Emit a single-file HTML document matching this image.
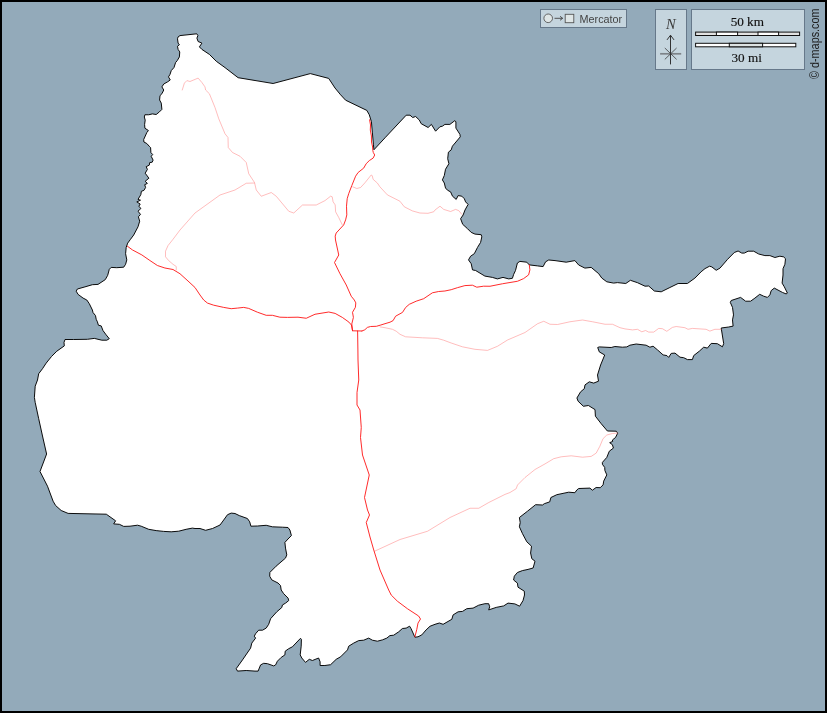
<!DOCTYPE html>
<html><head><meta charset="utf-8"><title>map</title>
<style>
html,body{margin:0;padding:0;background:#93aaba;}
body{width:827px;height:713px;overflow:hidden;position:relative;font-family:"Liberation Sans",sans-serif;}
svg{position:absolute;left:0;top:0;display:block;will-change:transform}
</style></head><body>
<svg width="827" height="713" viewBox="0 0 827 713">
<rect x="0" y="0" width="827" height="713" fill="#93aaba"/>
<polygon points="178.1,36.9 180,35.6 196.8,33.8 197.9,35.6 196.9,38.1 198.1,41.5 201.9,43.1 199.4,46.9 201.9,49.4 209.4,54.4 216.25,61.25 225,67.6 238.1,77.7 273.1,83.5 310.3,73.6 328.7,78.4 335,88 340.6,94.8 345.6,100.2 366.8,110.4 369.3,114.8 371.4,121.7 372.4,132.9 373.4,144.2 373.9,149.8 385,137.8 406.2,115.2 410,115.2 412.7,117.5 415.6,116.5 419.3,120 421.2,123.7 428.1,127.5 431.4,124.4 435.6,131.2 439.9,126.8 442.4,126.2 444.9,124.4 449.9,124.4 454.9,120.6 455.9,121.9 455.9,128.1 459.9,134.3 460.3,136.8 452.4,146.2 451.2,149.9 448.4,152.2 447.7,158.7 448.9,163.7 445.5,169.3 444.3,175.5 442.4,179.9 444.3,183 445.5,188 447.5,190.2 450.6,191.9 452.5,196.2 456.2,199.4 458.1,195.6 461.8,196.2 464.3,198.7 465.6,201.9 468.1,204.4 465,210 463.1,215 460.6,218.7 462.7,224.3 467.5,228.7 471.2,232.4 475,234.1 481.2,234.7 481.8,236.8 480.6,242.4 477.5,247.4 474.3,253.7 470.6,256.2 468.5,259.9 471.2,263.7 472.5,269.9 475.6,270.5 484.9,276.1 492.4,277.4 497.4,278.9 503,277.4 508.7,278.9 512.4,278.3 513.7,274.3 515.5,270.5 517.4,263 519.9,261.4 526.8,262.2 529.3,264.9 537.5,265.9 543.1,266.6 545.6,261.8 548.7,260 555,260.6 566.2,262.2 574.9,260.6 578.7,265 584.9,268.1 591.2,267.4 598.7,273.7 601.8,278.1 606.8,281.8 613.6,283.1 617.4,282.6 625.8,283.5 630.4,280.3 637.5,282.7 645,286.2 648.7,286 654.3,291 661.2,291.8 669.9,287.5 678.1,283.5 687.4,283.5 694.9,278.1 701.1,271.8 705,268.6 709.6,266.2 711.8,266.9 716.2,270.3 720,268.1 727.5,259.4 734.3,252.5 738.1,251 741.8,253.1 744.3,253.1 748.1,251.2 753.7,251.2 758.7,254 764.9,255.6 769.9,255.6 774.9,257.5 779.9,256.2 783.6,256.9 785.5,258.7 784.9,264.3 783,268.7 783,275 782.1,283.1 784.3,286.8 787.4,293.1 786.1,293.9 782.4,292.4 774.3,288.1 771.2,290.6 769.9,294.9 767.4,297.4 763.7,296.2 759.7,294.3 754.9,298.1 750.6,301.2 745.6,301.2 740.6,297.4 731.2,300.5 730.3,302.4 732.5,307.4 733.5,314.9 732.5,319.9 733.1,326.1 728.7,327 721.2,328 723.7,343.7 722.4,346.8 717.4,343.7 711.2,343.4 707.4,348.1 703.7,347.2 699.3,351.2 693.7,355.6 692.4,359.6 687.5,359.6 683.7,357.7 680,357.2 675,353.1 671.2,353.4 668.7,357.4 666.9,355.6 663.1,354.9 657.5,349.9 653.1,346.2 649.9,347.2 646.1,345.2 636.2,344 629.9,345.2 626.8,346.9 622.4,347.2 614.9,346.5 611.2,347.5 599.3,346.9 597.7,347.5 599.3,351.9 604.7,355 600.6,365 597.5,375 598.5,381.2 593.7,383.1 589.3,381.8 585,384.9 584.3,388.7 580.6,391.8 576.9,398 578.1,401.2 583.4,406.3 588.4,405.5 595,409.6 595.4,416.2 601.2,423.7 607.4,431 616.2,431.2 617.7,433.1 615.5,437.5 612.4,440 612.7,441.4 609.7,442.7 612.4,444.7 613.4,448.1 609.3,451.2 606.8,457.4 602.4,462.4 602.4,464.3 604.7,467.4 604.9,470.5 606.8,474.9 603.7,481.1 603.1,484.9 600.2,487.7 596.1,487.5 592.4,490.2 589.9,488.1 578.7,488.5 576.8,490 574.9,492.7 568.7,492.2 556.8,494.7 550.9,497.5 549.7,501.9 544.3,503.7 542.5,505 535.6,504.7 527.5,511.2 519.4,517.5 520.2,522.5 519.4,526.8 522.5,533.7 526.8,541.8 531.5,546.2 530.6,553 531.8,558.7 535,561.2 533.1,568 528,569.4 522.4,570.6 517.4,572.5 514.3,576.2 513.6,580 517.4,583.1 518,587.2 524.3,591.2 524.5,595 523,600.6 519.6,606.2 514.9,603.9 508,603.1 503.7,605.9 496.2,607.4 488.7,609.9 489.7,606.8 488.7,603.7 484.9,603.7 478.7,605.2 473.1,608.1 466.8,608.7 462.5,611.4 458.1,611.8 453.1,614.9 451.8,619.3 443.1,624.3 439.4,623 435,624.3 430,626.25 426.1,629.9 421.8,634.9 418,636.8 414.9,637.2 411.1,628.7 409.6,626.2 406.2,628.1 402.4,628.5 398.7,631.8 393.7,635.2 389.9,635.6 386.8,638.1 382.4,639.9 377.4,641.2 372.4,640.2 368.7,638.1 363.7,640.2 358.7,640.6 353.7,643.1 348.7,646.2 347.5,649.9 340.6,656.8 336.2,659.3 330.6,664.7 324.9,665.5 320.1,665.5 320.1,661.8 318.6,658 312.4,660.5 309.3,659.3 305.5,662.4 301.8,658 300.2,654.9 301.2,646.2 301.4,639.3 300.5,638.3 292.4,646.8 288.7,648.7 285.2,651.2 284.9,654.9 281.2,657.4 277.4,661.2 275.6,664.9 273.7,665.9 267.5,663.7 263.7,663.3 260.6,664.9 258.1,671.1 255,671.1 246.2,670.5 237.5,671.1 236.2,668.7 242.5,659.9 250.6,648.1 251.8,643.1 255.6,638.1 254.3,636.2 255.6,633.7 258.7,630.2 262.5,630.2 266.2,628.1 268.7,624.3 270.6,618.7 276.8,611.8 281.8,607.5 282.4,605 285.6,603.1 288.7,600.6 288.1,598.1 283.7,593.7 281.2,590 280.5,585.5 278,583 271.8,579.9 269.7,576.2 269.9,572.4 276.1,566.2 285.5,558.1 286.8,554.9 285.5,548.1 284.9,542.4 288,539 291.4,535.6 289.9,530 288,527.5 282.4,527.2 272.4,526.8 266.2,525.3 257.4,526 250.9,526.2 249.7,521.8 247.4,518.5 239.3,515.6 235,513.5 231.2,513.1 227.5,514.7 223.7,520 220,525 212.5,528.5 205.6,530.3 200,528.5 195,528.5 192.4,528.1 186.1,529.3 178.7,531.2 171.2,531.8 163.7,531.4 156.2,530.6 148.7,529.3 141.2,526.2 137.5,525.2 130,526.2 123.7,526.4 119.4,524.3 113.7,523.9 115.6,520.8 106.3,514.2 68.1,513.4 61.2,510.5 55.6,505.5 53.1,501.2 47.5,486.2 40,471.5 46.6,454 42.5,436 38.7,418.7 35.2,402.4 34.4,397.4 35.2,386.2 37.5,380 38.7,373.7 42.5,368.7 46.2,363.1 51.5,356.5 56.8,351.2 64.3,345.9 64,342.4 65,339.5 73.7,339.5 87.4,339.3 94.3,338.4 101.8,340.2 106.8,340.2 109.3,338.7 106.2,334.9 103,330.6 101.2,325.9 98.4,325.2 97.4,321.8 96.2,319.3 95.5,315.6 93,312.5 92.4,310 89.3,303.7 86.8,300 83.1,298.1 78.1,294.4 76.2,291.2 77.4,289 84.9,286.9 92.4,284.7 98,284.4 105.3,279.6 107.7,275.3 109.3,269.3 111.2,267.4 116.8,267.7 123.7,267.2 125.6,264.3 126.8,259.9 125.6,253.7 126.2,247.4 127.7,243.1 130.5,239.3 133.7,235 138,226.8 139.7,221.2 138.4,216.8 140.5,214.4 138,211.2 140.9,208.5 138.9,206.2 140.2,204 136.8,201.9 140.5,200.2 138,199.4 140.8,194.7 141.4,191.3 143.9,190.4 145.6,187.5 144.7,184.7 147.4,183.4 145.2,181.3 148.9,178.2 145.2,173.2 147.4,169.4 146.2,166.7 149.3,165.1 149.7,162.6 152.2,162.2 153.1,160.1 151.2,156.3 152.7,154.5 150.9,152.6 150.6,147.6 149.3,146.3 146.8,143.5 143.9,142 143.7,139.5 146.8,132.6 148.4,130.5 144.9,128.2 144.6,124.5 145.2,120.1 144.3,117 144.9,114.75 148.75,114.75 152.4,113.9 156.2,114.5 159.4,111.9 161.9,109.4 161.25,103.1 159.6,100 160,95.6 161.9,93.75 163.75,90 161.9,86.9 163.75,84 167.5,81.9 170.25,80 168.5,76.9 170,74.4 171.25,70.6 174,67.5 175.6,62.5 177.25,60.6 179.4,56.9 179.75,51.9 178.1,49.4 177.5,46.25 179.4,44.75 178.1,43.1 177.5,38.75" fill="#ffffff" stroke="#000" stroke-width="0.95" stroke-linejoin="round"/>
<g fill="none" stroke="#ff8c8c" stroke-width="0.58" stroke-linejoin="round" stroke-linecap="round">
<polyline points="182.25,90 184.4,83.1 186.9,80.6 190,81.5 198.1,78.1 201.9,82.5 205,86.9 205.6,90 209.4,93.75 215,107.5 218.75,118.75 225,133.75 228,137.5 228.25,147.5 232.5,152.5 240,156.25 246.25,162.5 248.75,173.75 254.5,182.5 256.25,190 261.25,196.25 271.25,192.5 276.25,196.25 288.75,211.25 293.75,213 302.5,205 316.25,205 325,200.6 330.6,196.2 332.2,196.8 333.1,201.8 335.2,204.9 335.6,211.8 338.7,217.4 342.2,224.7"/>
<polyline points="254.5,183 246.25,183.25 235,190 220,195 195,213 180,230 173,239.3 168,245.6 165.5,251.2 165.5,256.8 168.6,260.5 173,264.3 176.25,266.5 176.25,270"/>
<polyline points="352.7,186.8 356.8,188.5 360.6,187.5 365,182.7 371.2,175 372.2,175.6 373.1,179.3 377.4,183.1 379.9,186.8 387.4,194.9 399.9,201.2 404.3,206.8 412.4,210.9 419.9,213 428,213.3 433.75,211.75 435,210 440,206.2 443.7,209.4 450.6,211.5 455.6,209.4 458.7,210.6 461.8,214.3"/>
<polyline points="380.1,326.9 385,327.7 392.5,329.3 396.2,331.2 400,334.3 405.6,336.8 422.5,337.8 437.4,338.4 443.7,340.2 451.2,343 462.4,346.8 474.9,349.3 487.5,350.4 497.5,346.25 507.5,340 525,332.5 537.5,323.75 543.75,321.25 550,324.25 557.5,324.5 570,321.75 582.5,320 592.5,321.75 605,324.25 612.5,324.25 620,327.7 625,328.9 632.5,329.9 637.5,329.3 641.8,331.8 645.6,330.5 648.7,332.1 653.7,332.1 658.7,328.4 662.4,328.7 666.8,331.3 672.4,327.4 676.2,326.5 684.9,327.7 688,329.3 692.4,328.4 706.1,329.3 709.9,331.1 714.9,329.3 721.2,329.3"/>
<polyline points="374.5,551.25 400,539.5 427.5,531.25 450,517.5 470,508.25 478.75,508.25 488.75,502.5 505,494.4 510,492.5 516.2,488.7 517.5,485 525,477.5 535,469.5 545,463.9 553.7,458.7 561.2,456.8 571.2,455.8 582.5,457.2 591.2,456.4 596.2,453.1 599.9,446.2 603,438.7 606.8,435 612.4,433.5 617.4,433.1"/>
</g>
<g fill="none" stroke="#ff1818" stroke-width="0.92" stroke-linejoin="round" stroke-linecap="round">
<polyline points="127.4,246.2 132.4,249.9 141.8,254.9 149.9,260.5 157.4,265.5 164.9,268 173,269.5 180,273.75 188,281 195,287.5 200,295 203.7,300 207.5,303.1 213.7,305.2 223.7,307.4 231.2,308.7 237.4,308.1 243.7,307.4 248.7,308.4 257.4,312.2 266.2,315.3 272.4,315.3 279.9,317.2 287.4,317.4 298,317.2 306.25,318.25 315,314.25 328.75,312 335.1,313.4 342.3,317.4 348.9,322.1 351.4,325 352.5,330.5"/>
<polyline points="369.6,119.8 370.5,125 370.3,130 371.4,136 371.5,142 372.6,147 372.8,150.4 373.3,152.5 374.7,155 373.1,158.1 369.3,160.6 366.2,163.7 363.7,168.1 358.1,172.5 355.6,176.2 351.8,185.6 348.7,193.7 347.2,198.7 346.5,206.2 346.8,214.9 345.6,219.9 343.7,224.9 336.2,233 335.2,236.1 335.5,240 338.75,255 334.5,262.5 340,273.75 346.25,285 351.25,296.25 354.3,300 355.8,302.9 355.4,307.3 352.5,312.3 353.4,317.4 351.8,323.9 352.5,330.5"/>
<polyline points="352.5,330.8 361.9,331"/>
<polyline points="357.6,331 357.9,350 358,360 358.75,380 357,392.5 357,405 360,410 361.25,427.5 360.5,437.5 362.5,455 369.25,475 364.5,497.5 367.5,510 369.5,515 366.25,522.5 370,537 373.75,550 380,570 388.7,590 391.2,595 397.4,601.2 407.4,608.7 418.6,616 420.5,619 418,623.1 416.8,629.3 414.9,636.8"/>
<polyline points="361.9,331 364.8,329.8 367.4,327.4 370.6,326.5 376.4,326.3 380.8,325 385,323.7 390,322.2 393.1,320.6 395.6,316.2 402.5,312.4 405.6,307.5 409.3,304.3 416.2,301.2 423.7,298.7 432.4,292.8 438.7,291.5 444.9,291 451.2,289.7 457.4,287.7 464.9,285.6 472.4,285.2 476.8,287.2 483.6,286.2 490,286.25 502.5,283.75 517.5,281.25 523.6,278.6 528.6,274.9 529.9,269.9 529.3,264.9"/>
</g>
<g fill="#000">
<rect x="0" y="0" width="827" height="2"/>
<rect x="0" y="711" width="827" height="2"/>
<rect x="0" y="0" width="2" height="713"/>
<rect x="825" y="0" width="2" height="713"/>
</g>
<g>
<rect x="540.5" y="9.5" width="86" height="18" fill="#c5d5de" stroke="#66788a" stroke-width="1"/>
<circle cx="548.2" cy="18.3" r="4.3" fill="#dfe6e6" stroke="#555" stroke-width="0.9"/>
<path d="M554.5 18.3H562.5M560 16.3L562.7 18.3L560 20.3" fill="none" stroke="#444" stroke-width="0.9"/>
<rect x="565.2" y="14.3" width="8.6" height="8.4" fill="#dfe6e6" stroke="#555" stroke-width="0.9"/>
<text x="579.6" y="22.6" font-family="Liberation Sans, sans-serif" font-size="10.8" fill="#444">Mercator</text>
<rect x="655.5" y="9.5" width="31" height="60" fill="#c5d5de" stroke="#66788a" stroke-width="1"/>
<text x="670.8" y="28.8" text-anchor="middle" font-family="Liberation Serif, serif" font-style="italic" font-size="14.5" fill="#3a3a3a">N</text>
<g fill="none">
<path d="M660.1 53.8H681.2" stroke="#7d8388" stroke-width="1.7"/>
<path d="M670.5 35.4V64.4M667 39.9L670.5 35.2L674 39.9" stroke="#2a2a2a" stroke-width="0.95"/>
<path d="M664.8 48L676.6 59.4M676.6 48L664.8 59.4" stroke="#333" stroke-width="0.75"/>
</g>
<rect x="691.5" y="9.5" width="113" height="60" fill="#c5d5de" stroke="#66788a" stroke-width="1"/>
<text x="747.3" y="25.8" text-anchor="middle" font-family="Liberation Serif, serif" font-size="13.2" fill="#111" stroke="#111" stroke-width="0.15">50 km</text>
<text x="746.7" y="61.9" text-anchor="middle" font-family="Liberation Serif, serif" font-size="13.2" fill="#111" stroke="#111" stroke-width="0.15">30 mi</text>
<g stroke="#111" stroke-width="1">
<rect x="695.6" y="32.1" width="104" height="3.4" fill="#e2e2e2"/>
<rect x="716.4" y="32.1" width="21.2" height="3.4" fill="#fff"/>
<rect x="758" y="32.1" width="20.6" height="3.4" fill="#fff"/>
<rect x="695.6" y="43.3" width="100.2" height="3.5" fill="#fff"/>
<rect x="729.3" y="43.3" width="33.3" height="3.5" fill="#dde3e3"/>
</g>
<text transform="translate(818.7,79) rotate(-90) scale(0.866,1)" font-family="Liberation Sans, sans-serif" font-size="12.5" fill="#1c1c1c">© d-maps.com</text>
</g>
</svg>
</body></html>
